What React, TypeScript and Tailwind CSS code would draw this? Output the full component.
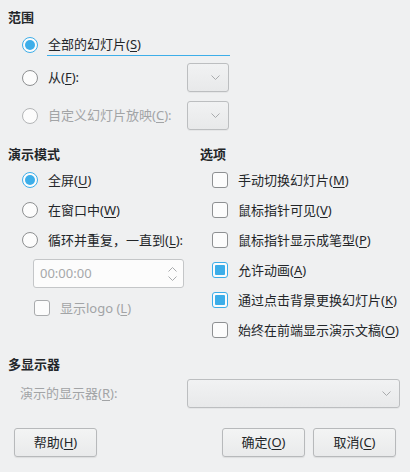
// 幻灯片放映设置对话框
import React from "react";

function Radio({ checked = false, disabled = false }: { checked?: boolean; disabled?: boolean }) {
  return (
    <div
      className={`flex h-[16px] w-[16px] shrink-0 items-center justify-center rounded-full border bg-[#fcfcfc] ${
        checked ? "border-[#3daee9]" : disabled ? "border-[#b3b5b7]" : "border-[#8e9092]"
      }`}
    >
      {checked && <div className="h-[10px] w-[10px] rounded-full bg-[#3daee9]" />}
    </div>
  );
}

function Check({ checked = false, disabled = false }: { checked?: boolean; disabled?: boolean }) {
  return (
    <div
      className={`flex h-[16px] w-[16px] shrink-0 items-center justify-center rounded-[3px] border bg-[#fcfcfc] ${
        checked ? "border-[#3daee9]" : disabled ? "border-[#a9abad]" : "border-[#8e9092]"
      }`}
    >
      {checked && <div className="h-[10px] w-[10px] rounded-[1px] bg-[#3daee9]" />}
    </div>
  );
}

function Chevron({ up = false }: { up?: boolean }) {
  return (
    <svg width="9" height="5" viewBox="0 0 9 5" className="block">
      <polyline
        points={up ? "0.5,4.5 4.5,0.5 8.5,4.5" : "0.5,0.5 4.5,4.5 8.5,0.5"}
        fill="none"
        stroke="#a9abad"
        strokeWidth="1"
      />
    </svg>
  );
}

function Combo({ className = "" }: { className?: string }) {
  return (
    <div
      className={`flex h-[29px] items-center justify-end rounded-[3px] border border-[#bcbec0] bg-gradient-to-b from-[#f1f2f3] to-[#e8e9ea] pr-[8px] shadow-[0_1px_0_rgba(0,0,0,0.04)] ${className}`}
    >
      <Chevron />
    </div>
  );
}

function Btn({ children }: { children: React.ReactNode }) {
  return (
    <div className="flex h-[29px] w-[83px] items-center justify-center rounded-[3px] border border-[#b7b9bb] bg-gradient-to-b from-[#f3f4f4] to-[#e9eaeb] shadow-[0_1px_1px_rgba(0,0,0,0.08)]">
      {children}
    </div>
  );
}

const U = ({ c }: { c: string }) => <span className="underline underline-offset-2">{c}</span>;

export default function App() {
  return (
    <div className="flex h-[472px] w-[410px] flex-col bg-[#eff0f1] pt-[7px] font-['Noto_Sans','Noto_Sans_CJK_SC',sans-serif] text-[13px] leading-none text-[#232629]">
      {/* 范围 */}
      <div className="flex h-[20px] items-center pl-[8px] font-bold">范围</div>
      <div className="mt-[6px] flex h-[24px] items-center pl-[22px]">
        <Radio checked />
        <div className="ml-[9px] flex h-[22px] w-[183px] items-center border-b border-[#3daee9] pl-[1px]">
          全部的幻灯片(<U c="S" />)
        </div>
      </div>
      <div className="mt-[6px] flex h-[29px] w-[229px] items-center pl-[22px]">
        <Radio />
        <span className="ml-[10px]">
          从(<U c="F" />):
        </span>
        <Combo className="ml-auto w-[42px]" />
      </div>
      <div className="mt-[9px] flex h-[29px] w-[229px] items-center pl-[22px]">
        <Radio disabled />
        <span className="ml-[10px] text-[#a2a4a6]">
          自定义幻灯片放映(<U c="C" />):
        </span>
        <Combo className="ml-auto w-[42px]" />
      </div>

      {/* 演示模式 / 选项 */}
      <div className="mt-[14px] flex">
        <div className="flex w-[200px] flex-col">
          <div className="flex h-[20px] items-center pl-[8px] font-bold">演示模式</div>
          <div className="mt-[1px] flex h-[30px] items-center pl-[22px]">
            <Radio checked />
            <span className="ml-[10px]">
              全屏(<U c="U" />)
            </span>
          </div>
          <div className="flex h-[30px] items-center pl-[22px]">
            <Radio />
            <span className="ml-[10px]">
              在窗口中(<U c="W" />)
            </span>
          </div>
          <div className="flex h-[30px] items-center pl-[22px]">
            <Radio />
            <span className="ml-[10px]">
              循环并重复，一直到(<U c="L" />):
            </span>
          </div>
          <div className="ml-[33px] mt-[4px] flex h-[29px] w-[151px] items-center justify-between rounded-[3px] border border-[#c4c6c8] bg-[#fcfcfc] pl-[6px] pr-[6px] text-[#a6a8aa]">
            <span>00:00:00</span>
            <div className="flex flex-col gap-[4px]">
              <Chevron up />
              <Chevron />
            </div>
          </div>
          <div className="mt-[5px] flex h-[30px] items-center pl-[34px]">
            <Check disabled />
            <span className="ml-[10px] text-[#a2a4a6]">
              显示logo (<U c="L" />)
            </span>
          </div>
        </div>
        <div className="flex flex-1 flex-col">
          <div className="flex h-[20px] items-center font-bold">选项</div>
          {[
            ["手动切换幻灯片", "M", false],
            ["鼠标指针可见", "V", false],
            ["鼠标指针显示成笔型", "P", false],
            ["允许动画", "A", true],
            ["通过点击背景更换幻灯片", "K", true],
            ["始终在前端显示演示文稿", "O", false],
          ].map(([label, key, on], i) => (
            <div key={i} className={`flex h-[30px] items-center pl-[12px] ${i === 0 ? "mt-[1px]" : ""}`}>
              <Check checked={on as boolean} />
              <span className="ml-[10px]">
                {label as string}(<U c={key as string} />)
              </span>
            </div>
          ))}
        </div>
      </div>

      {/* 多显示器 */}
      <div className="mt-[9px] flex h-[20px] items-center pl-[8px] font-bold">多显示器</div>
      <div className="mt-[5px] flex h-[29px] items-center">
        <span className="w-[187px] pl-[20px] text-[#a2a4a6]">
          演示的显示器(<U c="R" />):
        </span>
        <Combo className="w-[213px]" />
      </div>

      {/* 按钮 */}
      <div className="mt-[20px] flex px-[14px]">
        <Btn>
          帮助(<U c="H" />)
        </Btn>
        <div className="ml-auto flex gap-[8px]">
          <Btn>
            确定(<U c="O" />)
          </Btn>
          <Btn>
            取消(<U c="C" />)
          </Btn>
        </div>
      </div>
    </div>
  );
}
